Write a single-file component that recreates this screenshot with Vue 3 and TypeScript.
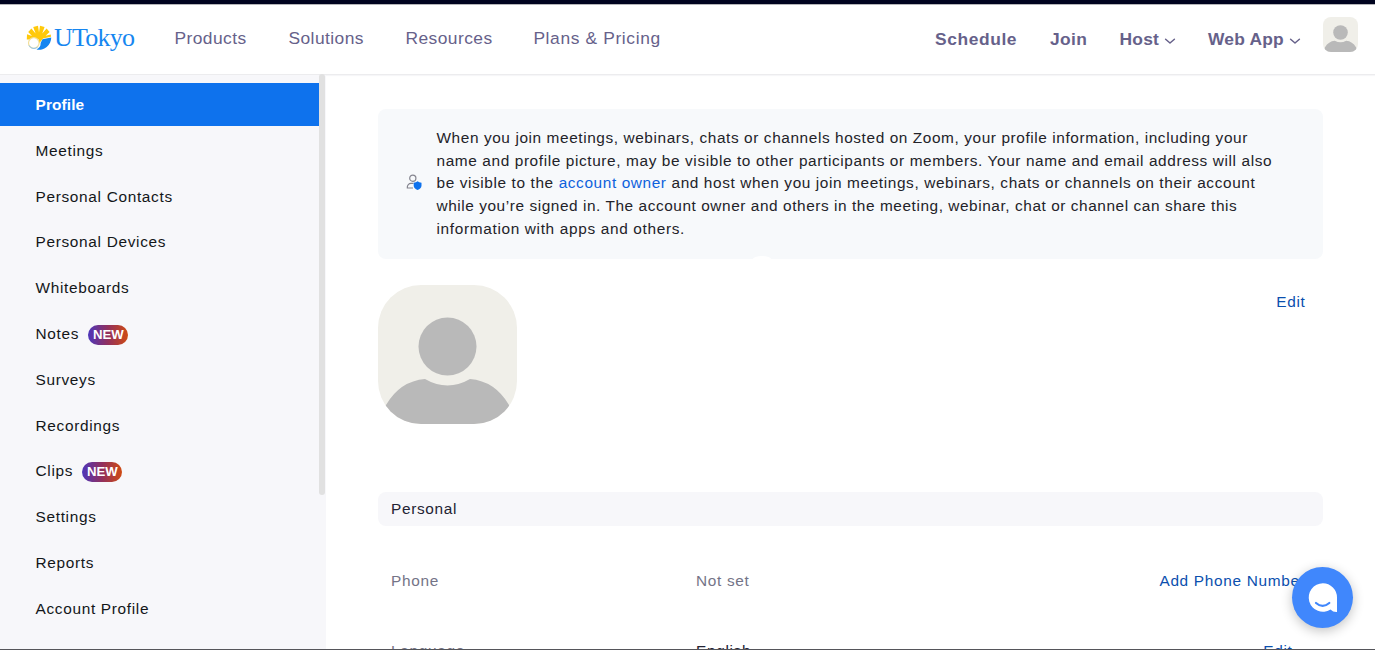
<script setup lang="ts">
interface NavItem { label: string; cls: string }
interface SideItem { label: string; isNew?: boolean; active?: boolean }

const mainNav: NavItem[] = [
  { label: 'Products', cls: 'products' },
  { label: 'Solutions', cls: 'solutions' },
  { label: 'Resources', cls: 'resources' },
  { label: 'Plans & Pricing', cls: 'plans' },
]

const sideItems: SideItem[] = [
  { label: 'Profile', active: true },
  { label: 'Meetings' },
  { label: 'Personal Contacts' },
  { label: 'Personal Devices' },
  { label: 'Whiteboards' },
  { label: 'Notes', isNew: true },
  { label: 'Surveys' },
  { label: 'Recordings' },
  { label: 'Clips', isNew: true },
  { label: 'Settings' },
  { label: 'Reports' },
  { label: 'Account Profile' },
]
</script>

<template>
  <div class="page">
    <div class="top-strip"></div>
    <header class="header">
      <a class="logo">
        <svg class="logo-mark" viewBox="0 0 26 26" width="26" height="26">
          <path d="M13 14.5 L.8 14.5 L1 9.2 L6 11 L2.2 7 L5.4 3.4 L9.6 8.4 L7.2 2 L12 .8 L13 7.5 L14 .8 L18.6 2 L16.2 8.4 L20.6 3.6 L23.6 7 L19.6 10.8 L24.8 9.4 L25 11.8 L17 13.6 L13 18.5Z" fill="#ffc90a" />
          <path d="M16.5 14.2 L25.2 12.6 A12 12 0 0 1 10.5 24.4 Q15 22 14.6 18Z" fill="#1686f0" />
          <circle cx="7.8" cy="18" r="5.3" fill="#fff" stroke="#f2df9b" stroke-width="1.2" />
          <path d="M3 20.5 A5.5 5.5 0 0 0 11.4 22.2" fill="none" stroke="#8fc5f6" stroke-width="1" />
        </svg>
        <span class="logo-text">UTokyo</span>
      </a>
      <nav class="main-nav">
        <a v-for="item in mainNav" :key="item.label" :class="item.cls">{{ item.label }}</a>
      </nav>
      <nav class="user-nav">
        <a class="schedule">Schedule</a>
        <a class="join">Join</a>
        <a class="host">Host<svg class="chevron" viewBox="0 0 12 8" width="12" height="8"><path d="M1.6 2.2 L6 6 L10.4 2.2" /></svg></a>
        <a class="web-app">Web App<svg class="chevron" viewBox="0 0 12 8" width="12" height="8"><path d="M1.6 2.2 L6 6 L10.4 2.2" /></svg></a>
      </nav>
      <div class="mini-avatar">
        <svg viewBox="0 0 139 139" width="35" height="35">
          <circle cx="69.5" cy="61.5" r="29" />
          <path d="M0 139 L8 120 Q22 96 47 94 Q69.5 107 92 94 Q117 96 131 120 L139 139Z" />
        </svg>
      </div>
    </header>

    <div class="body">
      <aside class="sidebar">
        <ul class="side-list">
          <li v-for="item in sideItems" :key="item.label" :class="{ active: item.active }">
            <span>{{ item.label }}</span><b v-if="item.isNew" class="badge">NEW</b>
          </li>
        </ul>
        <div class="scroll-thumb"></div>
      </aside>

      <main class="content">
        <section class="notice">
          <svg class="notice-icon" viewBox="0 0 17 17" width="17" height="17">
            <circle cx="6.8" cy="4.2" r="3.1" fill="none" stroke="#85858f" stroke-width="1.2" />
            <path d="M7 14 H1.3 C1 11 3 9.4 5 9.4 H7.5" fill="none" stroke="#85858f" stroke-width="1.2" />
            <path d="M11.6 7.3 Q13 8.6 15.5 8.7 V11.7 Q15.2 14.8 11.6 16 Q8 14.8 7.7 11.7 V8.7 Q10.2 8.6 11.6 7.3Z" fill="#0e72ed" />
          </svg>
          <p class="notice-text">
            <span class="l1">When you join meetings, webinars, chats or channels hosted on Zoom, your profile information, including your</span>
            <span class="l2">name and profile picture, may be visible to other participants or members. Your name and email address will also</span>
            <span class="l3">be visible to the <a>account owner</a> and host when you join meetings, webinars, chats or channels on their account</span>
            <span class="l4">while you’re signed in. The account owner and others in the meeting, webinar, chat or channel can share this</span>
            <span class="l5">information with apps and others.</span>
          </p>
          <i class="notch"></i>
        </section>

        <section class="identity">
          <div class="avatar">
            <svg viewBox="0 0 139 139" width="139" height="139">
              <circle cx="69.5" cy="61.5" r="29" />
              <path d="M0 139 L8 120 Q22 96 47 94 Q69.5 107 92 94 Q117 96 131 120 L139 139Z" />
            </svg>
          </div>
          <a class="link edit">Edit</a>
        </section>

        <h2 class="section-title">Personal</h2>
        <div class="row">
          <span class="label">Phone</span>
          <span class="value muted">Not set</span>
          <a class="link add">Add Phone Number</a>
        </div>
        <div class="row">
          <span class="label">Language</span>
          <span class="value">English</span>
          <a class="link row-edit">Edit</a>
        </div>
      </main>
    </div>

    <button class="chat" aria-label="Chat">
      <svg viewBox="0 0 61 61" width="61" height="61">
        <path d="M30.9 16.3 A14.2 14.2 0 1 0 38.5 42.5 Q41 45.2 45 45 V30.5 A14.2 14.2 0 0 0 30.9 16.3Z" fill="#fff" />
        <path d="M24 36 Q30.6 41.7 37.3 36" fill="none" stroke="#4087fc" stroke-width="2.2" stroke-linecap="round" />
      </svg>
    </button>
    <div class="bottom-line"></div>
  </div>
</template>

<style>
body { overflow: hidden; }
</style>

<style scoped>
* { box-sizing: border-box; }
.page {
  position: relative;
  width: 1375px;
  height: 650px;
  overflow: hidden;
  display: flex;
  flex-direction: column;
  background: #fff;
  color: #232333;
  font-family: "Liberation Sans", Arial, sans-serif;
  font-size: 15.4px;
  letter-spacing: .68px;
}
.top-strip { flex: none; height: 5px; background: #00031f; border-bottom: 1px solid #b5b5b8; }
.header {
  flex: none;
  height: 70px;
  display: flex;
  border-bottom: 1px solid #ececee;
  box-shadow: 0 1px 1px #f6f6f8;
  color: #66618a;
}
.logo { width: 174px; padding: 20px 0 0 26px; display: flex; align-items: flex-start; }
.logo-mark { flex: none; }
.logo-text {
  margin: -1px 0 0 2px;
  font: 26px/28px "Liberation Serif", serif;
  letter-spacing: -.75px;
  color: #1686f0;
}
.main-nav { display: flex; font-size: 17.4px; line-height: 22px; padding: 22px 0 0 .4px; letter-spacing: .45px; white-space: nowrap; }
.products, .solutions { flex: none; width: 114px; }
.resources { width: 128px; margin-left: 3px; }
.plans { letter-spacing: .63px; }
.user-nav { display: flex; margin-left: auto; font-size: 17.4px; font-weight: 700; line-height: 22px; padding-top: 23px; letter-spacing: .6px; white-space: nowrap; }
.schedule { width: 115px; }
.join { width: 69.5px; letter-spacing: .4px; }
.host { width: 88.5px; letter-spacing: .25px; }
.web-app { width: 115px; letter-spacing: .22px; }
.chevron { margin-left: 5.3px; }
.chevron path { fill: none; stroke: #66618a; stroke-width: 1.5; stroke-linecap: round; stroke-linejoin: round; }
.mini-avatar { width: 35px; height: 35px; margin: 12px 17px 0 0; border-radius: 8px; overflow: hidden; background: #f0efe9; }
.mini-avatar svg, .avatar svg { display: block; fill: #b9b9b9; }
.body { flex: 1; min-height: 0; display: flex; }
.sidebar { position: relative; flex: none; width: 326px; padding-top: 8px; background: #f7f7fa; }
.side-list { list-style: none; width: 319px; margin: 0; padding: 0; display: flex; flex-direction: column; gap: 2.8px; }
.side-list li { height: 43px; padding: 1.2px 0 0 35.5px; display: flex; align-items: center; color: #131619; }
.side-list .active { background: #0e72ed; color: #fff; font-weight: 700; letter-spacing: .12px; }
.badge {
  width: 40px;
  height: 20px;
  margin: 1.4px 0 0 9.3px;
  border-radius: 10px;
  background: linear-gradient(90deg, #4d36bb 0%, #92305d 50%, #cf4a12 100%);
  color: #fff;
  font: 700 13.2px/20px "Liberation Sans", sans-serif;
  letter-spacing: 0;
  text-align: center;
}
.scroll-thumb { position: absolute; right: 1px; top: -1px; width: 6px; height: 421px; border-radius: 3px; background: #e1e1e1; }
.content { flex: 1; min-width: 0; padding: 34px 52px 0 52px; }
.notice { position: relative; height: 150px; padding: 17px 0 0 28px; display: flex; border-radius: 8px; background: #f7f9fb; }
.notice-icon { flex: none; margin: 47.5px 13.5px 0 0; }
.notice-text { margin: 0; padding-top: .6px; line-height: 22.9px; color: #232329; white-space: nowrap; }
.notice-text span { display: block; }
.l1 { letter-spacing: .59px; }
.l2 { letter-spacing: .61px; }
.l3 { letter-spacing: .605px; }
.l4 { letter-spacing: .565px; }
.l5 { letter-spacing: .66px; }
.notice-text a { color: #0e62dd; }
.notch { position: absolute; left: 374px; bottom: -6px; width: 20px; height: 9px; border-radius: 50%; background: #fff; }
.identity { display: flex; justify-content: space-between; margin-top: 26px; height: 139px; }
.avatar { width: 139px; height: 139px; border-radius: 43px; overflow: hidden; background: #f0efe9; }
.link { color: #0b4fae; }
.edit { margin: 7px 17.5px 0 0; line-height: 20px; }
.section-title { height: 34px; margin: 68px 0 20px; padding-left: 13px; border-radius: 8px; background: #f7f7fa; font-size: 15.4px; font-weight: 400; line-height: 34px; }
.row { height: 70px; display: flex; align-items: center; padding-left: 13px; white-space: nowrap; }
.label { width: 305px; color: #747487; }
.muted { color: #747487; }
.link.add { margin: 0 17.5px 0 auto; }
.link.row-edit { margin: 0 30.5px 0 auto; }
.chat { position: absolute; left: 1292px; top: 567px; width: 61px; height: 61px; padding: 0; border: 0; border-radius: 50%; background: #4087fc; box-shadow: 0 3px 12px rgba(0, 0, 0, .24); }
.chat svg { display: block; }
.bottom-line { position: absolute; left: 0; right: 0; bottom: 0; height: 1px; background: #55555a; }
</style>
